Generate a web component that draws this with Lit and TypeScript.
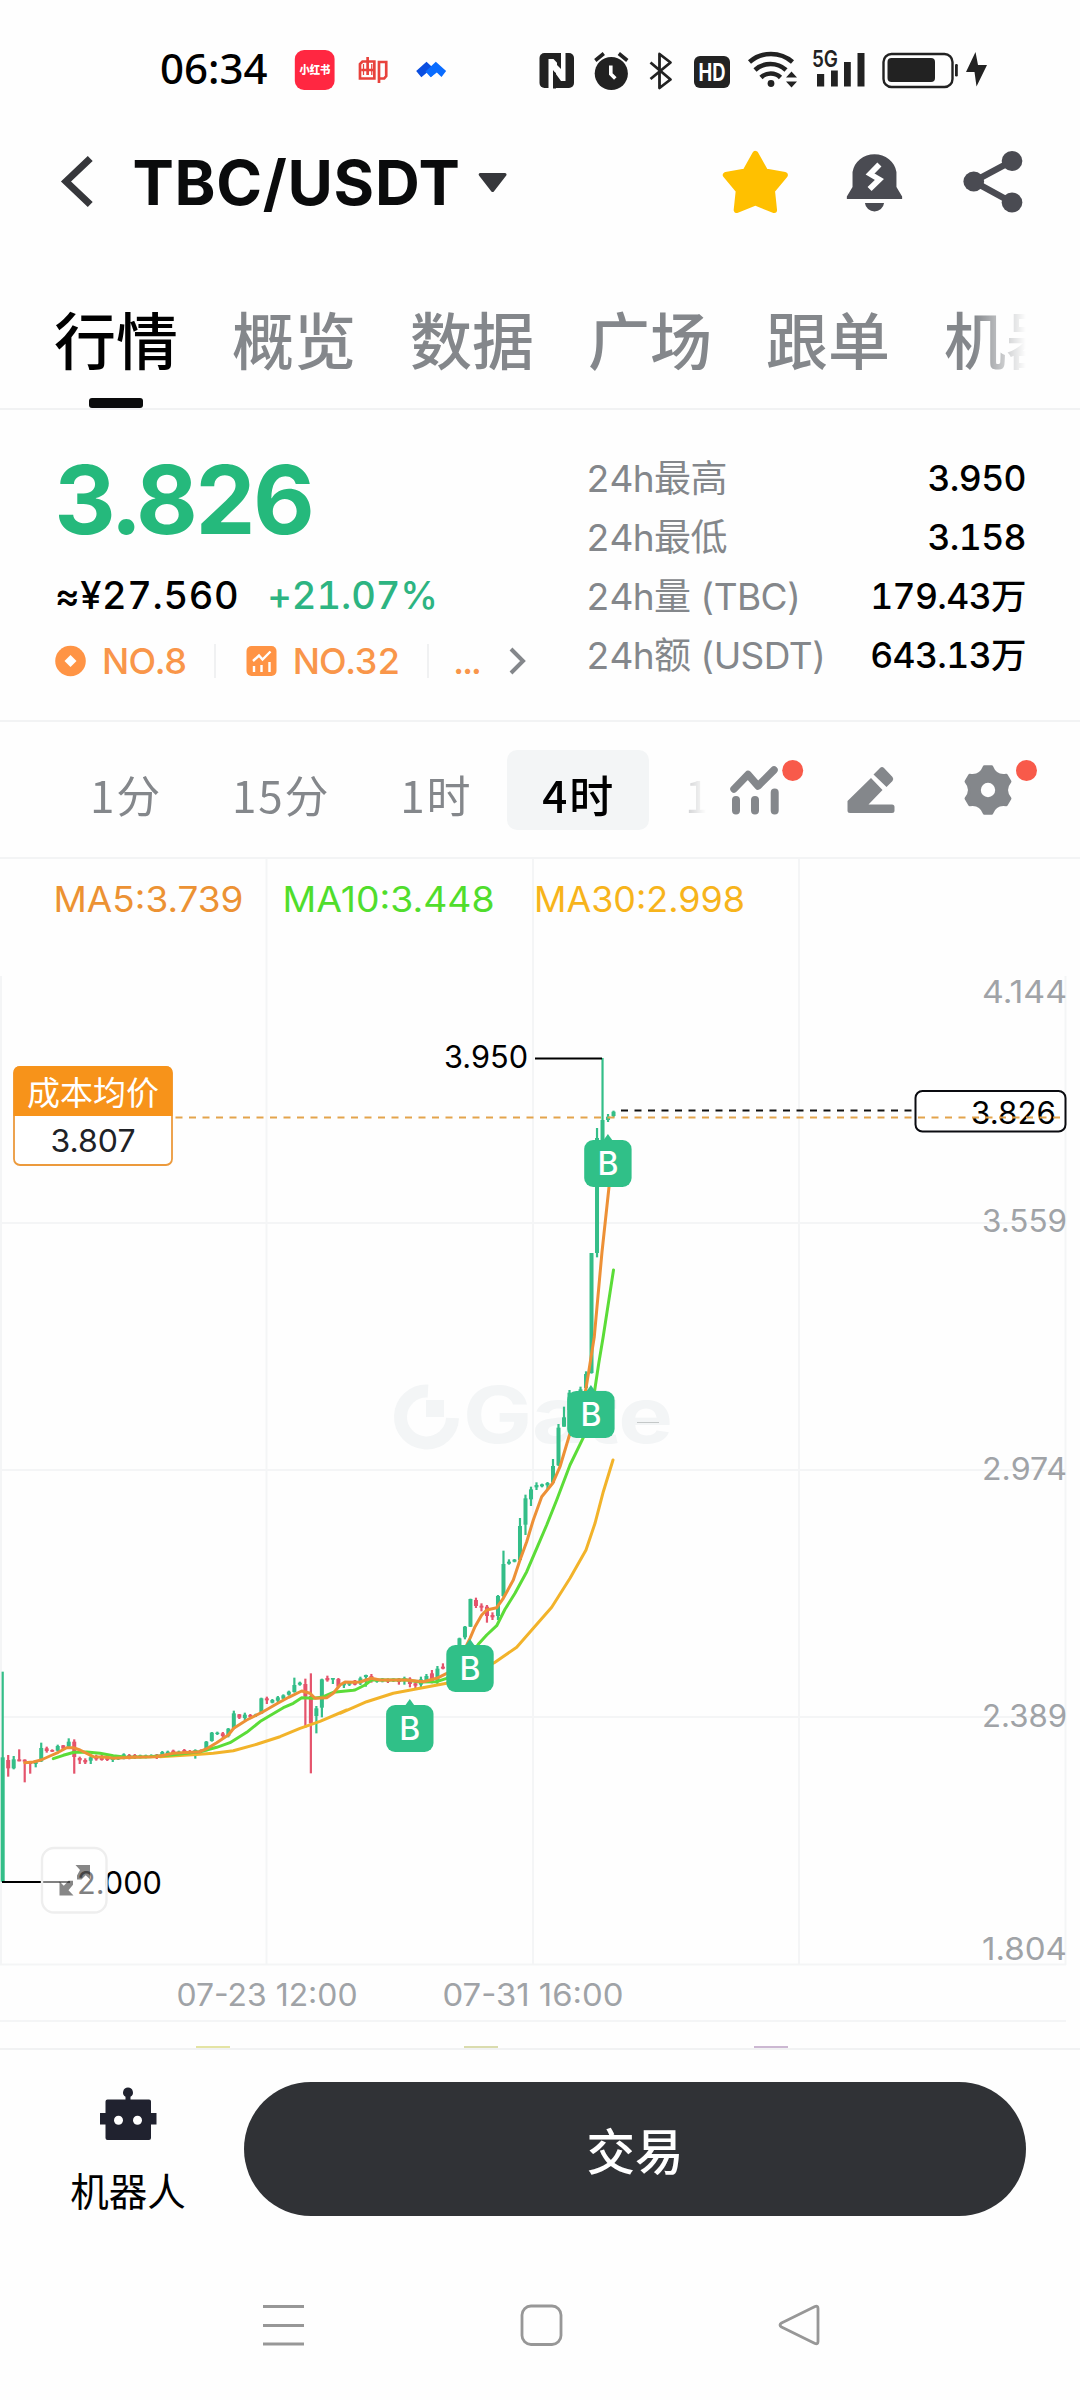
import { LitElement, html, svg, css } from "lit";
import { customElement } from "lit/decorators.js";

type Candle = [number, number, number, number, number, "g" | "r"];

const STEP = 5.503;
const candleX = (i: number) => 2.7 + STEP * i;

// index, body top, body bottom, wick top, wick bottom (thirds of a pixel below `base`), direction
const early: Candle[] = [
  [0, 592, 965, 335, 965, "g"], [1, 600, 625, 585, 650, "r"], [2, 598, 625, 588, 628, "g"], [3, 598, 604, 568, 604, "r"],
  [4, 599, 605, 598, 667, "r"], [5, 606, 612, 606, 641, "r"], [6, 603, 612, 600, 622, "g"], [7, 564, 604, 548, 606, "g"],
  [8, 565, 573, 560, 578, "r"], [9, 570, 575, 568, 576, "r"], [10, 558, 572, 554, 575, "g"], [11, 556, 566, 555, 568, "r"],
  [12, 545, 560, 535, 565, "g"], [13, 545, 591, 538, 641, "r"], [14, 594, 601, 590, 612, "r"], [15, 600, 607, 595, 612, "r"],
  [16, 592, 602, 588, 612, "g"], [17, 588, 598, 584, 602, "r"], [18, 588, 600, 585, 602, "r"], [19, 590, 600, 586, 603, "r"],
  [20, 590, 600, 588, 606, "g"], [21, 592, 598, 590, 600, "g"], [22, 583, 592, 580, 598, "g"], [23, 585, 594, 582, 598, "r"],
  [24, 585, 594, 582, 597, "r"], [25, 586, 593, 584, 595, "g"], [26, 586, 593, 584, 595, "g"], [27, 586, 592, 583, 594, "g"],
  [28, 584, 594, 582, 597, "r"], [29, 576, 586, 573, 589, "g"], [30, 575, 584, 572, 587, "g"], [31, 572, 582, 569, 586, "r"],
  [32, 575, 583, 572, 588, "g"], [33, 570, 582, 567, 586, "r"], [34, 573, 580, 570, 584, "r"], [35, 570, 582, 568, 596, "g"],
  [36, 570, 576, 568, 579, "r"], [37, 545, 572, 543, 574, "g"], [38, 518, 543, 516, 545, "g"], [39, 518, 522, 515, 525, "g"],
  [40, 520, 528, 516, 535, "r"], [41, 506, 528, 504, 532, "g"], [42, 460, 505, 452, 508, "g"], [43, 463, 473, 462, 477, "r"],
  [44, 464, 474, 458, 480, "g"], [45, 465, 471, 462, 474, "r"], [46, 463, 468, 461, 471, "g"], [47, 415, 460, 413, 462, "g"],
  [48, 415, 421, 410, 432, "r"], [49, 420, 428, 417, 430, "g"], [50, 412, 422, 408, 428, "g"], [51, 406, 416, 403, 419, "g"],
  [52, 395, 404, 392, 407, "g"], [53, 375, 396, 353, 398, "g"], [54, 368, 374, 365, 377, "g"], [55, 372, 410, 356, 503, "r"],
  [56, 408, 490, 340, 640, "r"], [57, 445, 468, 438, 520, "g"], [58, 358, 443, 356, 472, "g"], [59, 354, 361, 347, 365, "r"],
  [60, 354, 359, 354, 372, "g"], [61, 357, 380, 354, 382, "r"],
];
const late: Candle[] = [
  [62, 968, 976, 966, 984, "g"], [63, 966, 974, 963, 978, "g"], [64, 962, 974, 960, 976, "r"], [65, 955, 970, 950, 975, "g"],
  [66, 945, 951, 944, 980, "g"], [67, 948, 964, 942, 968, "r"], [68, 957, 965, 955, 968, "g"], [69, 956, 964, 954, 967, "g"],
  [70, 957, 965, 955, 969, "r"], [71, 956, 963, 955, 966, "g"], [72, 956, 966, 954, 974, "r"], [73, 954, 960, 950, 974, "g"],
  [74, 956, 972, 952, 982, "r"], [75, 970, 977, 966, 984, "r"], [76, 958, 974, 950, 984, "g"], [77, 948, 962, 942, 968, "g"],
  [78, 940, 964, 930, 970, "r"], [79, 926, 964, 918, 974, "g"], [80, 920, 926, 910, 928, "r"], [83, 835, 865, 833, 865, "g"],
  [84, 800, 832, 798, 838, "g"], [85, 717, 800, 716, 801, "g"], [86, 720, 738, 713, 744, "r"], [87, 737, 743, 730, 754, "r"],
  [88, 740, 768, 735, 788, "r"], [89, 765, 772, 757, 780, "r"], [90, 708, 768, 705, 780, "g"], [91, 612, 708, 572, 712, "g"],
  [92, 605, 611, 598, 614, "g"], [93, 599, 605, 597, 607, "g"], [94, 498, 600, 474, 602, "g"], [95, 415, 494, 404, 525, "g"],
  [96, 388, 418, 380, 438, "g"], [97, 375, 382, 367, 390, "g"], [98, 373, 379, 371, 382, "g"], [99, 369, 376, 366, 388, "g"],
  [100, 318, 368, 297, 370, "g"], [101, 203, 316, 192, 318, "g"], [102, 172, 200, 140, 200, "g"], [103, 98, 150, 90, 150, "g"],
  [105, 88, 110, 80, 110, "g"], [106, 42, 84, 34, 90, "g"], [107, -321, 39, -321, 41, "g"], [108, -666, -321, -696, -308, "g"],
  [109, -720, -620, -906, -620, "g"], [110, -730, -720, -738, -714, "g"], [111, -745, -732, -748, -728, "g"],
];

type Pt = [number, number];
const from = (x: number, y: number, pts: Pt[]): Pt[] => pts.map(([a, b]) => [x + a / 3, y + b / 3]);
const line = (pts: Pt[]) => pts.map((p) => `${p[0].toFixed(1)},${p[1].toFixed(1)}`).join(" ");

const ma5: Pt[] = [
  ...from(0, 1560, [[74, 608], [100, 606], [123, 600], [150, 588], [175, 577], [200, 563], [220, 563], [240, 570], [260, 580], [280, 590], [320, 592], [340, 595], [400, 592], [470, 590], [520, 580], [600, 575], [620, 566], [650, 548], [685, 525], [701, 505], [740, 480], [784, 458], [833, 430], [866, 412], [905, 393], [930, 400], [945, 415], [980, 413], [1000, 400], [1020, 375], [1035, 366], [1060, 367]]),
  ...from(340, 1360, [[60, 966], [94, 955], [120, 960], [200, 960], [250, 965], [290, 955], [325, 938], [358, 900], [390, 835], [405, 800], [425, 765], [440, 750], [470, 743], [490, 715], [520, 660], [540, 600], [560, 545], [580, 480], [605, 410], [638, 370], [660, 320], [690, 220], [720, 150], [737, 90]]),
  [589, 1370], [594.3, 1336.7], [601.9, 1253], [609, 1187], [612, 1150],
];
const ma10: Pt[] = [
  ...from(0, 1560, [[160, 596], [190, 586], [222, 577], [260, 576], [300, 580], [340, 587], [380, 592], [450, 590], [520, 584], [600, 575], [650, 562], [690, 548], [740, 517], [784, 482], [850, 443], [880, 430], [905, 413], [940, 415], [965, 412], [1000, 397], [1060, 391]]),
  ...from(340, 1360, [[45, 990], [75, 975], [94, 960], [200, 960], [240, 966], [290, 965], [320, 955], [380, 900], [415, 853], [440, 825], [470, 797], [495, 748], [525, 700], [560, 635], [590, 565], [620, 495], [650, 420], [690, 315], [730, 233], [752, 165], [765, 85]]),
  [598.8, 1363], [603.2, 1336.7], [613.5, 1270],
];
const ma30: Pt[] = [
  ...from(0, 1560, [[480, 590], [600, 583], [640, 580], [700, 572], [770, 553], [840, 530], [900, 505], [960, 484], [1040, 450]]),
  ...from(340, 1360, [[0, 1060], [80, 1025], [160, 1000], [240, 985], [320, 970], [400, 940], [463, 908], [530, 862], [580, 805], [635, 742], [690, 655], [738, 570], [765, 490], [790, 395], [819, 300]]),
];

const gear = () => {
  const p = (deg: number, r: number) => {
    const a = (deg * Math.PI) / 180;
    return `${(988 + r * Math.cos(a)).toFixed(2)} ${(790 + r * Math.sin(a)).toFixed(2)}`;
  };
  let d = "";
  for (let k = 0; k < 6; k++) {
    const a = 60 * k - 90;
    d += `${k ? "L" : "M"}${p(a - 9, 23.5)}L${p(a + 9, 23.5)}Q${p(a + 30, 15)} ${p(a + 51, 23.5)}`;
  }
  return d + "Z";
};

@customElement("status-bar")
export class StatusBar extends LitElement {
  static styles = css`
    :host { display: flex; justify-content: space-between; align-items: center; height: 140px; padding: 0 75px 0 160px; box-sizing: border-box; }
    .left, .right { display: flex; align-items: center; height: 60px; }
    .time { font: 500 42px/56px "Noto Sans", "Open Sans", sans-serif; letter-spacing: 0; color: #000; width: 125px; height: 60px; }
    svg { display: block; flex: none; }
    text { font-family: "Inter", "Noto Sans CJK SC", sans-serif; }
    .xhs { font-size: 11.5px; font-weight: 900; fill: #fff; }
    .hd { font-size: 24px; font-weight: 700; fill: #fff; }
    .net { font-size: 23px; font-weight: 600; fill: #222; }
  `;
  render() {
    return html`
      <div class="left">
        <span class="time">06:34</span>
        <svg width="175.600" height="60" viewBox="276 39 170 60" preserveAspectRatio="none">
          <rect x="285.500" y="49" width="38.500" height="40" rx="9" fill="#ff2741" />
          <text class="xhs" x="290" y="73" textLength="30" lengthAdjust="spacingAndGlyphs">小红书</text>
          <g fill="none" stroke="#e8423c" stroke-width="2.600">
            <path d="M351 60.500h11.500v17H348.600V63zM356 56v18M350 69h12M367 82V61h7v14l-2 2.500h-4" />
          </g>
          <path d="M352 63v11M360 63v11" stroke="#e8423c" stroke-width="1.200" />
          <path d="M403 70L413 60.800L422 69.500L418 75.800L413.500 71.500L408 76.200Z" fill="#0a4ee0" />
          <path d="M412 70.500L422 60.800L432 70L427.500 76L423 71.500L417 76.200Z" fill="#0a6cff" />
        </svg>
      </div>
      <div class="right">
        <svg width="475" height="60" viewBox="530 39 475 60">
          <g transform="translate(0.500)">
            <rect x="539" y="52" width="34.500" height="35" rx="5" fill="#222" />
            <path d="M548 87.500V58l5 0 7.500 8V52h4.500v28h-4.500l-8-11v18.500z" fill="#fff" />
            <path d="M552.500 70v17.500h3V72zM556.500 52h4v16l-4-4z" fill="#222" />
          </g>
          <g transform="translate(2.300)">
            <circle cx="609" cy="72.500" r="16.600" fill="#222" />
            <path d="M593 59.500l8.500-7M625 59.500l-8.500-7" stroke="#222" stroke-width="3.600" />
            <path d="M608.500 64.500v8.500l4.500 4.500" fill="none" stroke="#fff" stroke-width="3.600" />
          </g>
          <path d="M650.500 61.500L670.500 78.500l-11 8.500V53l11 8.500L650.500 78" fill="none" stroke="#222" stroke-width="2.800" stroke-linejoin="round" />
          <rect x="694" y="55" width="36" height="32" rx="6" fill="#222" />
          <text class="hd" x="698.500" y="79.500" textLength="27" lengthAdjust="spacingAndGlyphs">HD</text>
          <g fill="none" stroke="#222" stroke-width="4.600">
            <path d="M749.500 61a32 31 0 0 1 43 0M755 69a23 23 0 0 1 31 0M761 76.500a14 14 0 0 1 19.500 0" />
          </g>
          <circle cx="771" cy="82.500" r="3.400" fill="#222" />
          <path d="M786 76.500l5.500-6 5.500 6zM786 80.500h11l-5.500 6z" fill="#222" />
          <text class="net" x="812" y="66" textLength="26" lengthAdjust="spacingAndGlyphs">5G</text>
          <path d="M817 73h7.200v12.500h-7.200zM831 69.500h6.800v16h-6.800zM844 61h6.800v24.500h-6.800zM857.500 52h7v33.500h-7z" fill="#222" />
          <rect x="883.500" y="53" width="69" height="33" rx="8" fill="none" stroke="#222" stroke-width="2.400" />
          <rect x="887.500" y="57" width="47.500" height="24" rx="4" fill="#222" />
          <rect x="955" y="63" width="2.800" height="12.500" rx="1.200" fill="#222" />
          <path d="M975.500 51L966 71h8.500l2 14.500L987 64h-9z" fill="#222" />
        </svg>
      </div>
    `;
  }
}

@customElement("pair-header")
export class PairHeader extends LitElement {
  static styles = css`
    :host { display: flex; justify-content: space-between; align-items: center; height: 84px; padding: 0 38px 0 52px; box-sizing: border-box; }
    .pair, .actions { display: flex; align-items: center; }
    .actions { gap: 41px; }
    svg { display: block; flex: none; }
    .name { font: 700 62px/84px "Inter", "Liberation Sans", sans-serif; letter-spacing: 0.700px; color: #0a0b0c; width: 341px; padding-top: 2px; white-space: nowrap; }
  `;
  render() {
    return html`
      <div class="pair">
        <svg width="80.400" height="84" viewBox="50 140 77.800 84" preserveAspectRatio="none"><path d="M87 158.500L63.500 181.500L87 204.500" fill="none" stroke="#36373b" stroke-width="6.800" /></svg>
        <span class="name">TBC/USDT</span>
        <svg width="41.300" height="84" viewBox="458 140 40 84" preserveAspectRatio="none"><path d="M465 174.500h24L477 190.500z" fill="#36373b" stroke="#36373b" stroke-width="3" stroke-linejoin="round" /></svg>
      </div>
      <div class="actions">
        <svg width="82.600" height="84" viewBox="706 140 80 84" preserveAspectRatio="none">
          <path d="M748 154l9.500 17.500 19 3.500-12.500 15.500 2 19.500-18-7.500-18 7.500 2-19.500L719.500 175l19-3.500z" fill="#ffc000" stroke="#ffc000" stroke-width="6" stroke-linejoin="round" />
        </svg>
        <svg width="74.400" height="84" viewBox="826 140 72 84" preserveAspectRatio="none">
          <path d="M842 187v-15a21.500 21 0 0 1 42.500 0v15l5.500 9.500v2.500H836.500v-2.500zM854 203h18.500a9.300 9.500 0 0 1-18.500 0z" fill="#4a4b52" />
          <path d="M868 164.500l-9 9.500 9 5.500-9.500 9.500" fill="none" stroke="#fff" stroke-width="5.500" />
        </svg>
        <svg width="91" height="84" viewBox="938 140 88 84" preserveAspectRatio="none">
          <path d="M997 161L960 181.500L997 202.500" fill="none" stroke="#4a4b52" stroke-width="6.500" />
          <circle cx="960" cy="181.500" r="10" fill="#4a4b52" /><circle cx="997" cy="161" r="10" fill="#4a4b52" /><circle cx="997" cy="202.500" r="10" fill="#4a4b52" />
        </svg>
      </div>
    `;
  }
}

@customElement("section-tabs")
export class SectionTabs extends LitElement {
  static styles = css`
    :host { display: block; height: 186px; border-bottom: 2px solid #f1f2f3; box-sizing: border-box; padding-left: 54px; }
    .row { display: flex; gap: 54px; width: 972px; height: 184px; overflow: hidden; -webkit-mask-image: linear-gradient(90deg, #000 920px, transparent 972px); mask-image: linear-gradient(90deg, #000 920px, transparent 972px); }
    .tab { display: flex; flex-direction: column; align-items: center; justify-content: space-between; flex: none; font: 500 62px/90px "Noto Sans CJK SC", sans-serif; color: #84878b; padding-top: 69px; box-sizing: border-box; height: 184px; }
    .on { color: #000; }
    .on::after { content: ""; width: 54px; height: 10px; border-radius: 3px; background: #0a0b0c; }
  `;
  render() {
    return html`<div class="row">
      ${["行情", "概览", "数据", "广场", "跟单", "机器人"].map((t, i) => html`<div class="tab ${i === 0 ? "on" : ""}">${t}</div>`)}
    </div>`;
  }
}

@customElement("price-summary")
export class PriceSummary extends LitElement {
  static styles = css`
    :host { display: flex; justify-content: space-between; height: 312px; border-bottom: 2px solid #f2f3f4; box-sizing: border-box; padding: 0 54px 0 55px; font-family: "Inter", "Noto Sans CJK SC", sans-serif; font-feature-settings: "tnum"; }
    .price { font-weight: 700; font-size: 95px; line-height: 120px; letter-spacing: -2.900px; color: #25b97c; padding-top: 30px; }
    .sub { display: flex; gap: 28px; font-weight: 500; font-size: 38px; line-height: 50px; margin-top: 10px; color: #000; letter-spacing: 0.650px; }
    .up { color: #2db482; letter-spacing: -0.050px; }
    .ranks { display: flex; align-items: center; height: 46px; margin-top: 18px; font-size: 36px; line-height: 46px; color: #f9964a; letter-spacing: -0.800px; }
    .ranks svg { display: block; flex: none; }
    .rank { display: flex; align-items: center; gap: 16px; font-weight: 500; }
    .bar { width: 2px; height: 34px; background: #f0f1f2; margin: 0 30px 0 27px; }
    .bar + .more { margin-left: -5px; }
    .more { width: 52px; font-weight: 500; }
    .stats { width: 440px; padding-top: 39px; }
    .stat { display: flex; justify-content: space-between; height: 59px; line-height: 59px; white-space: nowrap; }
    .k { color: #84878b; font-size: 37px; letter-spacing: -0.600px; }
    .v { color: #000; font-weight: 500; font-size: 35.500px; letter-spacing: -0.600px; }
  `;
  render() {
    const stats = [["24h最高", "3.950"], ["24h最低", "3.158"], ["24h量 (TBC)", "179.43万"], ["24h额 (USDT)", "643.13万"]];
    return html`
      <div>
        <div class="price">3.826</div>
        <div class="sub"><span>≈¥27.560</span><span class="up">+21.07%</span></div>
        <div class="ranks">
          <div class="rank">
            <svg width="31" height="32" viewBox="0 0 31 32"><circle cx="15.500" cy="16" r="15.300" fill="#ff9445" /><path d="M15.500 10l6 6-6 6-6-6z" fill="#fff" /></svg>
            <span>NO.8</span>
          </div>
          <i class="bar"></i>
          <div class="rank">
            <svg width="31" height="32" viewBox="0 0 31 32"><rect x="0.500" y="1" width="30" height="30" rx="5" fill="#ff9445" /><path d="M7 16l6-5.500 3.500 4 8-8M8 21v6M15.500 20v7M23.500 17v10" fill="none" stroke="#fff" stroke-width="2.400" /></svg>
            <span>NO.32</span>
          </div>
          <i class="bar"></i>
          <span class="more">...</span>
          <svg width="24" height="32" viewBox="0 0 24 32"><path d="M5 4l12 12L5 28" fill="none" stroke="#84878b" stroke-width="4" /></svg>
        </div>
      </div>
      <div class="stats">
        ${stats.map(([k, v]) => html`<div class="stat"><span class="k">${k}</span><span class="v">${v}</span></div>`)}
      </div>
    `;
  }
}

@customElement("period-bar")
export class PeriodBar extends LitElement {
  static styles = css`
    :host { display: flex; align-items: center; height: 137px; border-bottom: 2px solid #f3f4f5; box-sizing: border-box; padding-left: 55px; }
    .periods { display: flex; gap: 1.500px; align-items: center; width: 657px; height: 135px; overflow: hidden; box-sizing: border-box; -webkit-mask-image: linear-gradient(90deg, #000 600px, transparent 651px); mask-image: linear-gradient(90deg, #000 600px, transparent 651px); }
    .p { flex: none; height: 80px; padding: 0 33.500px 0 35px; box-sizing: border-box; border-radius: 10px; font: 400 44px/88px "Noto Sans CJK SC", sans-serif; letter-spacing: 1.800px; color: #84878b; }
    .on { background: #f3f5f6; color: #000; font-weight: 500; }
    svg { display: block; flex: none; }
  `;
  render() {
    return html`
      <div class="periods">
        ${["1分", "15分", "1时", "4时", "1天"].map((t) => html`<div class="p ${t === "4时" ? "on" : ""}">${t}</div>`)}
      </div>
      <svg width="368" height="135" viewBox="712 722 368 135">
        <g fill="none" stroke="#84878b">
          <path d="M734 789L748 774.500L758 786L774 770" stroke-width="7.500" stroke-linejoin="round" stroke-linecap="round" />
          <path d="M736 800v10.500M755 800v10.500M774.700 792.500v18" stroke-width="8" stroke-linecap="round" />
        </g>
        <circle cx="792.700" cy="770.500" r="10.500" fill="#f85a4a" />
        <path d="M871 778L882.500 790L868.500 804.500H892q2.500 0 2.500 2.500v3.500q0 2.500-2.500 2.500H850q-2.500 0-2.500-2.500V801zM873.500 774.500L880 768q2-2 4 0l8.500 9q1.500 2 0 4L886.500 787z" fill="#84878b" />
        <path d="${gear()}" fill="#84878b" stroke="#84878b" stroke-width="3" stroke-linejoin="round" />
        <circle cx="988" cy="790" r="7.200" fill="#fff" />
        <circle cx="1026.500" cy="770.500" r="10.500" fill="#f85a4a" />
      </svg>
    `;
  }
}

@customElement("kline-chart")
export class KlineChart extends LitElement {
  static styles = css`
    :host { display: block; height: 1191px; border-bottom: 2px solid #f1f2f3; box-sizing: border-box; }
    svg { display: block; }
    text { font-family: "Inter", "Noto Sans CJK SC", sans-serif; }
    .grid { stroke: #f4f5f6; stroke-width: 2; }
    .axis { font-size: 30.500px; fill: #a0a3a7; }
    .legend { font-size: 35px; }
    .mark { font-size: 31px; fill: #000; }
    .dark { font-size: 31px; fill: #202226; }
    .cost { font-size: 33px; fill: #fff; }
    .buy { font-size: 32px; font-weight: 500; fill: #fff; text-anchor: middle; }
    .logo { font-size: 78px; font-weight: 700; fill: #f3f5f6; }
    .ma { fill: none; stroke-width: 3; stroke-linejoin: round; stroke-linecap: round; }
    .g { fill: #34be88; }
    .r { fill: #e5546c; }
  `;
  private candles(list: Candle[], base: number) {
    return list.map(([i, bt, bb, wt, wb, c]) => {
      const x = candleX(i);
      return svg`<g class=${c}>
        <rect x=${x - 2} y=${base + bt / 3} width="4" height=${(bb - bt) / 3}></rect>
        <rect x=${x - 1.1} y=${base + wt / 3} width="2.2" height=${(wb - wt) / 3}></rect>
      </g>`;
    });
  }
  private buy(cx: number, top: number) {
    return svg`<path d="M${cx - 5} ${top + 1}L${cx} ${top - 6}L${cx + 5} ${top + 1}z" fill="#30c088"></path>
      <rect x=${cx - 23.7} y=${top} width="47.4" height="47" rx="9" fill="#30c088"></rect>
      <text class="buy" x=${cx} y=${top + 35}>B</text>`;
  }
  render() {
    const axis: [string, number][] = [["4.144", 1003], ["3.559", 1232], ["2.974", 1480], ["2.389", 1727], ["1.804", 1960]];
    return html`<svg width="1080" height="1189" viewBox="0 859 1080 1189">
      ${[1, 266.5, 533, 799].map((x) => svg`<line class="grid" x1=${x} x2=${x} y1=${x === 1 ? 976 : 859} y2="1965"></line>`)}
      <line class="grid" x1="1065.500" x2="1065.500" y1="976" y2="1965" />
      ${[1223, 1470, 1717, 1964.5, 2021].map((y) => svg`<line class="grid" x1="0" x2="1066" y1=${y} y2=${y}></line>`)}

      <path d="M428 1391a26 26 0 1 0 24.500 27" fill="none" stroke="#f3f5f6" stroke-width="13" />
      <rect x="426" y="1400" width="18" height="17" fill="#f3f5f6" />
      <text class="logo" x="463" y="1443" textLength="210" lengthAdjust="spacingAndGlyphs">Gate</text>
      <path d="M637 1422.500h22" stroke="#c4c8c8" stroke-width="1" />

      <text class="legend" x="53.500" y="911.500" textLength="190" lengthAdjust="spacingAndGlyphs" fill="#ec9233">MA5:3.739</text>
      <text class="legend" x="282.500" y="911.500" textLength="212" lengthAdjust="spacingAndGlyphs" fill="#50dd2c">MA10:3.448</text>
      <text class="legend" x="534" y="911.500" textLength="211" lengthAdjust="spacingAndGlyphs" fill="#f7b41b">MA30:2.998</text>

      ${axis.map(([t, y]) => svg`<text class="axis" x="982" y=${y} textLength="85" lengthAdjust="spacingAndGlyphs">${t}</text>`)}
      <text class="axis" x="176.500" y="2006" textLength="181" lengthAdjust="spacingAndGlyphs">07-23 12:00</text>
      <text class="axis" x="442.500" y="2006" textLength="181" lengthAdjust="spacingAndGlyphs">07-31 16:00</text>

      ${this.candles(early, 1560)}${this.candles(late, 1360)}
      <polyline class="ma" points=${line(ma30)} stroke="#f2b32a" />
      <polyline class="ma" points=${line(ma10)} stroke="#5bdc38" />
      <polyline class="ma" points=${line(ma5)} stroke="#ed9036" />

      <path d="M535 1058.500h67M2 1882h68" stroke="#000" stroke-width="2" />
      <text class="mark" x="444" y="1068" textLength="84" lengthAdjust="spacingAndGlyphs">3.950</text>
      <text class="mark" x="77" y="1894" textLength="85" lengthAdjust="spacingAndGlyphs">2.000</text>

      ${this.buy(607.9, 1140)}${this.buy(590.9, 1391)}${this.buy(470, 1645)}${this.buy(409.8, 1705)}

      <path d="M621 1110.500h294" stroke="#111" stroke-width="2.200" stroke-dasharray="7 6.500" />
      <rect x="915.500" y="1091" width="150" height="40.500" rx="7" fill="#fff" stroke="#0a0b10" stroke-width="2" />
      <text class="mark" x="971" y="1123.500" textLength="85" lengthAdjust="spacingAndGlyphs">3.826</text>
      <path d="M175.500 1117.500H1062" stroke="#e3a44c" stroke-width="2" stroke-dasharray="7 6.500" />

      <rect x="14" y="1067" width="158" height="98" rx="6" fill="#fff" stroke="#ec9a3c" stroke-width="1.800" />
      <path d="M13.500 1116v-43q0-7 7-7h145q7 0 7 7v43z" fill="#f7931a" />
      <text class="cost" x="27" y="1104.500" textLength="132">成本均价</text>
      <text class="dark" x="50.500" y="1152" textLength="85" lengthAdjust="spacingAndGlyphs">3.807</text>

      <rect x="42" y="1848" width="64.500" height="64.500" rx="12" fill="#fff" fill-opacity="0.500" stroke="#eee" stroke-width="2.400" />
      <path d="M75.500 1865H90v14.200l-4.300-4-4.200 4.200h-4.500v-4l3-5.500zM59.500 1881.500l4.300 4.300 4.700-5h4.500v4l-4.500 5.500 5 5.200H59.500z" fill="#000" fill-opacity="0.470" />

      <path d="M196 2047h34" stroke="#e4e4a4" stroke-width="2" /><path d="M464 2047h34" stroke="#dadcae" stroke-width="2" /><path d="M754 2047h34" stroke="#ccb8d2" stroke-width="2" />
    </svg>`;
  }
}

@customElement("trade-footer")
export class TradeFooter extends LitElement {
  static styles = css`
    :host { display: block; }
    .actions { display: flex; align-items: flex-start; height: 200px; padding: 32px 54px 0 58px; box-sizing: border-box; }
    .bot { display: flex; flex-direction: column; align-items: center; width: 140px; margin-right: 46px; font: 400 38.500px/56px "Noto Sans CJK SC", sans-serif; color: #000; }
    .bot svg { display: block; margin: 4px 0 19px; }
    .trade { flex: 1; height: 134px; border-radius: 67px; border: 0; padding: 3px 0 0; background: #303236; color: #fff; font: 500 48.500px/128px "Noto Sans CJK SC", sans-serif; text-align: center; box-sizing: border-box; }
    .nav { display: block; }
  `;
  render() {
    return html`
      <div class="actions">
        <div class="bot">
          <svg width="60" height="56" viewBox="98 2086 60 56">
            <path d="M128 2087.500a5 5 0 0 1 2.500 9.300v2.700H149a2 2 0 0 1 2 2v11.500h5.500v11.500H151v13.500a2 2 0 0 1-2 2H107.500a2 2 0 0 1-2-2v-13.500H100v-11.500h5.500V2101.500a2 2 0 0 1 2-2H125.500v-2.700a5 5 0 0 1 2.500-9.300z" fill="#20222f" />
            <circle cx="118.500" cy="2120.300" r="4.500" fill="#fff" /><circle cx="137.500" cy="2120.300" r="4.500" fill="#fff" />
          </svg>
          <span>机器人</span>
        </div>
        <div class="trade" role="button">交易</div>
      </div>
      <svg class="nav" width="1080" height="150" viewBox="0 2250 1080 150">
        <g fill="none" stroke="#979797" stroke-width="2.800" stroke-linejoin="round">
          <path d="M263 2306.500h41M263 2325.500h41M263 2344h41" />
          <rect x="522" y="2306" width="39" height="38.500" rx="9" />
          <path d="M781.500 2323L815 2306.500Q818 2305.500 818 2308.500V2341.500Q818 2344.500 815 2343.500L781.500 2327Q778.500 2325 781.500 2323z" />
        </g>
      </svg>
    `;
  }
}

@customElement("app-root")
export class AppRoot extends LitElement {
  static styles = css`
    :host { display: block; width: 1080px; height: 2400px; background: #fefefe; overflow: hidden; }
  `;
  render() {
    return html`<status-bar></status-bar><pair-header></pair-header><section-tabs></section-tabs><price-summary></price-summary><period-bar></period-bar><kline-chart></kline-chart><trade-footer></trade-footer>`;
  }
}
